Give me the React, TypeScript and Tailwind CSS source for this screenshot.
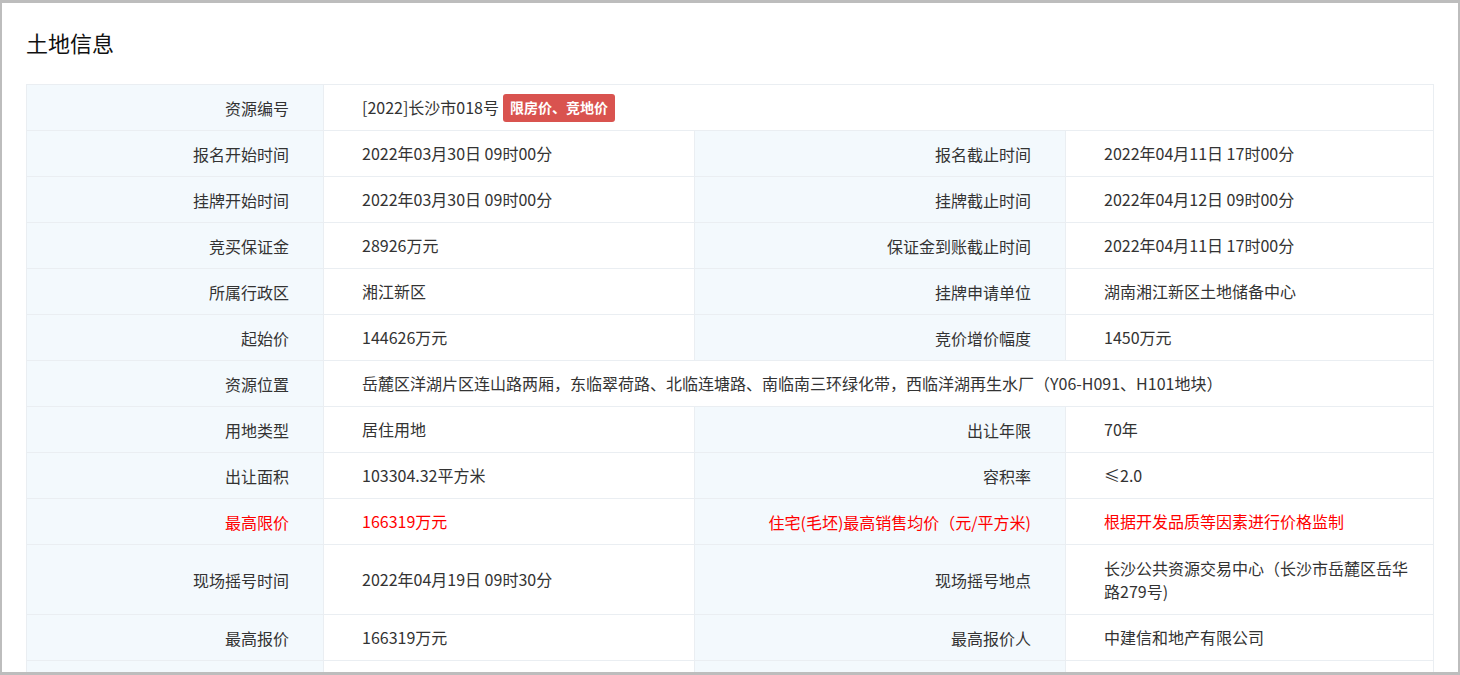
import React from "react";

type Row = { cells: [string, React.ReactNode, string?, React.ReactNode?]; red?: boolean; h?: string };

const rows: Row[] = [
  { cells: ["报名开始时间", "2022年03月30日 09时00分", "报名截止时间", "2022年04月11日 17时00分"] },
  { cells: ["挂牌开始时间", "2022年03月30日 09时00分", "挂牌截止时间", "2022年04月12日 09时00分"] },
  { cells: ["竞买保证金", "28926万元", "保证金到账截止时间", "2022年04月11日 17时00分"] },
  { cells: ["所属行政区", "湘江新区", "挂牌申请单位", "湖南湘江新区土地储备中心"] },
  { cells: ["起始价", "144626万元", "竞价增价幅度", "1450万元"] },
  { cells: ["资源位置", "岳麓区洋湖片区连山路两厢，东临翠荷路、北临连塘路、南临南三环绿化带，西临洋湖再生水厂（Y06-H091、H101地块）"] },
  { cells: ["用地类型", "居住用地", "出让年限", "70年"] },
  { cells: ["出让面积", "103304.32平方米", "容积率", "≤2.0"] },
  { cells: ["最高限价", "166319万元", "住宅(毛坯)最高销售均价（元/平方米)", "根据开发品质等因素进行价格监制"], red: true },
  { cells: ["现场摇号时间", "2022年04月19日 09时30分", "现场摇号地点", "长沙公共资源交易中心（长沙市岳麓区岳华路279号)"], h: "h-[70px]" },
  { cells: ["最高报价", "166319万元", "最高报价人", "中建信和地产有限公司"] },
  { cells: ["", "", "", ""] },
];

const lab = "bg-[#f3f9fd] flex items-center justify-end pr-[34px] border-r border-[#eaeef2]";
const val = "flex items-center pl-[38px] pr-4 border-r border-[#eaeef2] leading-[23px]";

export default function App() {
  return (
    <div
      className="h-[675px] overflow-hidden bg-white border-[#bdbdbd] border-t-[3px] border-l-2 border-r-2 border-b-[3px] pl-6 pr-6 text-[#333]"
      style={{ fontFamily: '"Noto Sans CJK SC", "Liberation Sans", sans-serif' }}
    >
      <div className="h-[81px] flex items-center text-[22px] pb-[2px] text-[#111]">土地信息</div>
      <div className="border-t border-l border-[#eaeef2] text-[16px]">
        <div className="grid grid-cols-[297px_1fr] h-[46px] border-b border-[#eaeef2]">
          <div className={lab}>资源编号</div>
          <div className={val}>
            [2022]长沙市018号
            <span className="ml-[4px] bg-[#d9534f] text-white font-bold text-[14px] px-[7px] h-[28px] flex items-center rounded-[3px]">
              限房价、竞地价
            </span>
          </div>
        </div>
        {rows.map((r, i) => {
          const red = r.red ? "text-[#ff0000]" : "";
          const h = r.h ?? "h-[46px]";
          if (r.cells.length === 2)
            return (
              <div key={i} className={`grid grid-cols-[297px_1fr] ${h} border-b border-[#eaeef2]`}>
                <div className={lab}>{r.cells[0]}</div>
                <div className={val}>{r.cells[1]}</div>
              </div>
            );
          return (
            <div key={i} className={`grid grid-cols-[297px_371px_371px_1fr] ${h} border-b border-[#eaeef2] ${red}`}>
              <div className={lab}>{r.cells[0]}</div>
              <div className={val}>{r.cells[1]}</div>
              <div className={lab}>{r.cells[2]}</div>
              <div className={val}>{r.cells[3]}</div>
            </div>
          );
        })}
      </div>
    </div>
  );
}
